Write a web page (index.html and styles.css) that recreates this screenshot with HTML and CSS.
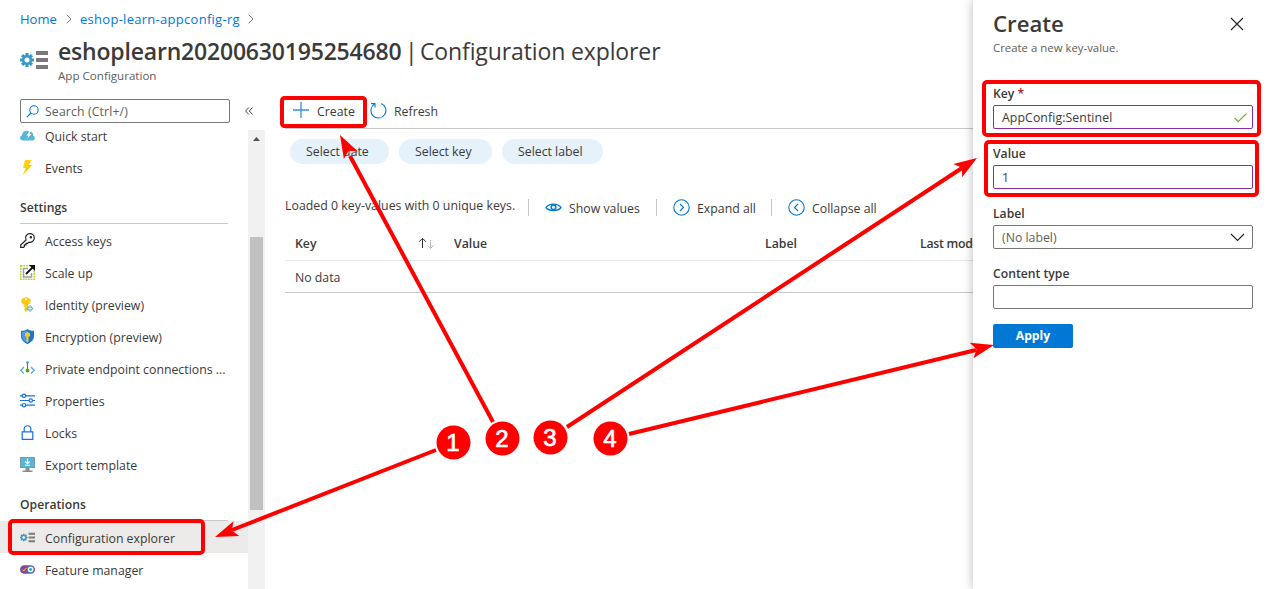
FILE: index.html
```html
<!DOCTYPE html>
<html lang="en">
<head>
<meta charset="utf-8">
<title>Configuration explorer</title>
<link rel="stylesheet" href="styles.css">
</head>
<body>
<svg class="defs" width="0" height="0">
  <symbol id="appconfig" viewBox="0 0 28 18">
    <g stroke="#3999c6" stroke-width="3.2"><path d="M7 2v14M0 9h14M2.1 4.1l9.8 9.8M2.1 13.9l9.8-9.8"/></g>
    <circle cx="7" cy="9" r="5" fill="#3999c6"/><circle cx="7" cy="9" r="2.5" fill="#fff"/>
    <path d="M16 0h12v4H16zM16 7h12v4H16zM16 14h12v4H16z" fill="#7a7a7a"/>
  </symbol>
</svg>
<div class="app">
  <div class="page">
    <nav class="crumbs">
      <a class="crumb-home">Home</a>
      <svg class="chev" viewBox="0 0 6 10"><path d="M.7.7 5 5 .7 9.3"/></svg>
      <a class="crumb-rg">eshop-learn-appconfig-rg</a>
      <svg class="chev" viewBox="0 0 6 10"><path d="M.7.7 5 5 .7 9.3"/></svg>
    </nav>
    <header class="title-row">
      <svg class="title-icon"><use href="#appconfig"/></svg>
      <div class="titles">
        <h1><b>eshoplearn20200630195254680</b><span class="bar">|</span><span class="blade-name">Configuration explorer</span></h1>
        <p>App Configuration</p>
      </div>
    </header>
    <div class="columns">
      <aside class="sidebar">
        <div class="search-row">
          <div class="search">
            <svg width="13" height="13" viewBox="0 0 13 13" fill="none" stroke="#0078d4" stroke-width="1.1"><circle cx="8" cy="5" r="4.2"/><path d="M5 8 .8 12.2"/></svg>
            <span>Search (Ctrl+/)</span>
          </div>
          <svg class="collapse" width="8" height="8" viewBox="0 0 8 8" fill="none" stroke="#444"><path d="M3.8.5.6 4l3.2 3.5M7.5.5 4.3 4l3.2 3.5"/></svg>
        </div>
        <div class="menu-wrap">
          <div class="menu">
            <div class="item first"><svg viewBox="0 0 15 15"><path d="M3 12.5C-.5 12.500-.8 8 2 7.500 2 3.500 6 1.500 9 3.500c3-.5 4.500 1.500 4 4 2.700.8 2.300 5-1 5z" fill="#59b4d9"/><path d="m9.500 3-3 4.500h2L7 11l4.500-5h-2L11 3z" fill="#fff"/></svg><span>Quick start</span></div>
            <div class="item"><svg viewBox="0 0 15 15"><path d="M5 0h6.500L8.700 5H12L3 15l2.500-7H3z" fill="#fcd116"/><path d="M11.500 0 8.700 5H12L5 12.500 8.500 6H6z" fill="#ffb900" opacity=".6"/></svg><span>Events</span></div>
            <h2>Settings</h2>
            <div class="item"><svg viewBox="0 0 15 15" fill="none" stroke="#222" stroke-width="1.200"><path d="M6 7C4.500 3 7 .7 10 .7c2.500 0 4.300 1.800 4.300 4.200 0 3.300-3 5-5.500 4.200L7.500 10.400H6v1.500H4.400v1.500l-.9 1H.7v-2.400z"/><circle cx="10.800" cy="4.200" r=".6" fill="#222"/></svg><span>Access keys</span></div>
            <div class="item"><svg viewBox="0 0 15 15" fill="none"><path d="M.8.8h13.400v13.400H.8z" stroke="#b8d432" stroke-width="1.600" stroke-dasharray="1.800 .8"/><path d="M8 3.500H3.500v8.500h8V8" stroke="#a0a1a2" stroke-width="1.500"/><path d="m6 9 7-7" stroke="#111" stroke-width="1.800"/><path d="M9 0h6v6z" fill="#111"/></svg><span>Scale up</span></div>
            <div class="item"><svg viewBox="0 0 15 15"><path d="M6 0l4.500 2v4L8 8v5.500L6 15 4.200 13v-1.500L5.300 10.500 4.200 9.500V8L1.500 6V2z" fill="#fcc91b"/><circle cx="6" cy="2.200" r="1" fill="#fff"/><path d="m10 8 3.500 3.500L10 15l-3.500-3.500z" fill="#59b4d9"/><path d="M10 9v5M8 11.500h4" stroke="#fff" stroke-width=".7"/></svg><span>Identity (preview)</span></div>
            <div class="item"><svg viewBox="0 0 15 15"><path d="M7.500 0c2 1.500 4 1.700 6.500 1.700V7c0 4-3 6.500-6.500 8C4 13.500 1 11 1 7V1.700C3.500 1.700 5.500 1.500 7.500 0z" fill="#1878d2"/><path d="M7.500 1.200c-2 1.300-3.500 1.500-5.500 1.600V7c0 3.500 2.500 5.500 5.500 6.800z" fill="#4b9bea"/><path d="M7.500 3 10 4.300v2.800L8.500 8v4.500l-1 1-1-1V8L5 7.100V4.300z" fill="#fcc91b"/></svg><span>Encryption (preview)</span></div>
            <div class="item"><svg viewBox="0 0 15 15" fill="none" stroke="#50aad6" stroke-width="1.300"><path d="M4 6 .8 9.300 4 12.600M11 6l3.200 3.300L11 12.600"/><path d="M7.500 1v8" stroke="#3a7d8c" stroke-width="1"/><circle cx="7.500" cy="1.500" r="1.300" fill="#3999c6" stroke="none"/><circle cx="7.500" cy="9.500" r="1.900" fill="#57a300" stroke="none"/></svg><span>Private endpoint connections ...</span></div>
            <div class="item"><svg viewBox="0 0 15 15" fill="#fff" stroke="#1b6fe0" stroke-width="1.200"><path d="M0 2.800h15M0 7.500h15M0 12.200h15"/><circle cx="4" cy="2.800" r="1.700"/><circle cx="10.800" cy="7.500" r="1.700"/><circle cx="4" cy="12.200" r="1.700"/></svg><span>Properties</span></div>
            <div class="item"><svg viewBox="0 0 15 15" fill="none" stroke="#1b6fe0" stroke-width="1.200"><path d="M2.200 6.800h10.600v7.500H2.200zM4.200 6.500V3.800C4.200-.3 10.800-.3 10.800 3.800v2.700"/></svg><span>Locks</span></div>
            <div class="item"><svg viewBox="0 0 15 15"><path d="M0 0h15v11H0z" fill="#7a9aa5"/><path d="M1 1h13v9H1z" fill="#59b4d9"/><path d="M5.500 11h4v2.500h3V15h-10v-1.500h3z" fill="#8a8d90"/><path d="M7.500 1.500v5M5.300 4.500l2.200 2.300 2.200-2.300M5 8.300h5" fill="none" stroke="#fff" stroke-width="1.100"/></svg><span>Export template</span></div>
            <h2>Operations</h2>
            <div class="item selected"><svg><use href="#appconfig"/></svg><span>Configuration explorer</span></div>
            <div class="item"><svg viewBox="0 0 15 15"><rect y="3.200" width="15" height="8.600" rx="4.300" fill="#804998"/><circle cx="10.600" cy="7.500" r="3.500" fill="#3999c6"/><circle cx="10.600" cy="7.500" r="2.100" fill="#3999c6" stroke="#fff" stroke-width="1.400"/><path d="m2.300 7.500 1.500 1.500 2.500-3" fill="none" stroke="#fcd116"/></svg><span>Feature manager</span></div>
          </div>
          <div class="scrollbar"><i class="up"></i><i class="thumb"></i></div>
        </div>
      </aside>
      <main class="content">
        <div class="toolbar">
          <div class="tool create"><svg width="16" height="16" viewBox="0 0 16 16" stroke="#3491dc" stroke-width="1.300"><path d="M8 0v16M0 8h16"/></svg><span>Create</span></div>
          <div class="tool refresh"><svg width="17" height="17" viewBox="0 0 17 17" fill="none" stroke="#0078d4" stroke-width="1.100"><path d="M11.300 1.600a7.500 7.500 0 1 1-6.800.5M5 5.500V1.600H1"/></svg><span>Refresh</span></div>
        </div>
        <div class="chips"><span class="chip c1">Select date</span><span class="chip c2">Select key</span><span class="chip c3">Select label</span></div>
        <div class="status">
          <span class="loaded">Loaded 0 key-values with 0 unique keys.</span>
          <div class="cmd show"><svg width="17" height="17" viewBox="0 0 17 17" fill="none" stroke="#0078d4" stroke-width="1.300"><path d="M1 8.500C4 4 13 4 16 8.500 13 12.500 4 12.500 1 8.500z"/><circle cx="8.500" cy="8.300" r="2.300" stroke-width="1.500"/></svg><span>Show values</span></div>
          <div class="cmd expand"><svg width="17" height="17" viewBox="0 0 17 17" fill="none" stroke="#0078d4" stroke-width="1.100"><circle cx="8.500" cy="8.500" r="7.700"/><path d="m7 5 3.500 3.500L7 12"/></svg><span>Expand all</span></div>
          <div class="cmd fold"><svg width="17" height="17" viewBox="0 0 17 17" fill="none" stroke="#0078d4" stroke-width="1.100"><circle cx="8.500" cy="8.500" r="7.700"/><path d="M10 5 6.500 8.500 10 12"/></svg><span>Collapse all</span></div>
        </div>
        <div class="table">
          <div class="thead">
            <div>Key<svg class="sort" width="17" height="13" viewBox="0 0 17 13" fill="none"><path d="M4.500 11V1.300M1 4.800l3.500-3.500L8 4.800" stroke="#333"/><path d="M12.500 3v8.500M9.500 8.500l3 3 3-3" stroke="#bbb"/></svg></div>
            <div>Value</div><div>Label</div><div class="modified">Last mod</div>
          </div>
          <div class="trow">No data</div>
        </div>
      </main>
    </div>
  </div>
  <section class="panel">
    <div class="panel-head"><h3>Create</h3><svg width="14" height="14" viewBox="0 0 14 14" stroke="#222" stroke-width="1.100"><path d="m1 1 12 12M13 1 1 13"/></svg></div>
    <p class="hint">Create a new key-value.</p>
    <div class="field"><label>Key <em>*</em></label><div class="box edited"><span class="keytext">AppConfig:Sentinel</span><svg width="13" height="10" viewBox="0 0 13 10" fill="none" stroke="#6bb32e" stroke-width="1.200"><path d="m.7 5 3.500 3.700L12.300.8"/></svg></div></div>
    <div class="field"><label>Value</label><div class="box edited"><span>1</span></div></div>
    <div class="field"><label>Label</label><div class="box select"><span class="muted">(No label)</span><svg width="15" height="9" viewBox="0 0 15 9" fill="none" stroke="#222" stroke-width="1.100"><path d="m1 1 6.500 6.500L14 1"/></svg></div></div>
    <div class="field"><label>Content type</label><div class="box"></div></div>
    <button class="apply">Apply</button>
  </section>
</div>
<svg class="callouts" width="1273" height="589" viewBox="0 0 1273 589">
  <g fill="none" stroke="#f00" stroke-width="4">
    <rect x="282" y="98" width="83" height="28" rx="2.500"/>
    <rect x="10" y="521" width="193" height="32" rx="3"/>
    <rect x="984" y="82" width="275" height="53" rx="3"/>
    <rect x="986" y="142" width="271" height="53" rx="3"/>
    <path d="M436 450 232 530M493 422 350 156M567 427 962 168M629 434 976 350"/>
  </g>
  <g fill="#f00">
    <path d="M0 0-23 8-18 0-23-8z" transform="translate(215 537) rotate(158.600)"/>
    <path d="M0 0-23 8-18 0-23-8z" transform="translate(340 135) rotate(-118.300)"/>
    <path d="M0 0-23 8-18 0-23-8z" transform="translate(977 158) rotate(-33.200)"/>
    <path d="M0 0-23 8-18 0-23-8z" transform="translate(994 345) rotate(-13.600)"/>
    <circle cx="453.500" cy="442.500" r="17"/><circle cx="502.500" cy="438.500" r="17"/><circle cx="550.500" cy="437.500" r="17"/><circle cx="610.500" cy="438.500" r="17"/>
  </g>
  <g class="numbers"><text x="453" y="451">1</text><text x="502" y="447">2</text><text x="550" y="446">3</text><text x="610" y="447">4</text></g>
</svg>
</body>
</html>
```
FILE: styles.css
```css
* { box-sizing: border-box; }
body { margin: 0; font: 12.3px/18px "Open Sans", "Noto Sans", sans-serif; color: #3b3a39; background: #fff; overflow: hidden; }
h1, h2, h3, p { margin: 0; }
svg { flex: none; }
.defs { position: absolute; }
.app { position: relative; display: flex; width: 1273px; height: 589px; overflow: hidden; }
.page { width: 973px; display: flex; flex-direction: column; overflow: hidden; }
.crumbs { display: flex; align-items: center; height: 38px; padding: 0 0 0 20px; color: #0078d4; font-size: 13px; }
.crumb-home { width: 46px; }
.crumb-rg { width: 162px; margin-left: 8px; margin-right: 6px; letter-spacing: .28px; white-space: nowrap; }
.chev { width: 6px; height: 10px; fill: none; stroke: #777; }
.title-row { display: flex; height: 53px; padding-left: 20px; }
.title-icon { width: 28px; height: 18px; margin-top: 13px; }
.titles { margin-left: 10px; white-space: nowrap; }
h1 { font-size: 23px; line-height: 30px; font-weight: 400; margin-top: -2px; display: flex; }
h1 b { font-weight: 600; width: 347px; letter-spacing: -.19px; }
.bar { width: 15px; }
.blade-name { letter-spacing: -.12px; }
.titles p { margin-top: 1px; font-size: 11.6px; line-height: 18px; color: #605e5c; }
.columns { display: flex; height: 498px; }
.sidebar { width: 265px; display: flex; flex-direction: column; }
.search-row { display: flex; align-items: center; height: 32px; padding: 8px 0 0 20px; }
.search { display: flex; align-items: center; gap: 6px; width: 210px; height: 24px; border: 1px solid #777; border-radius: 2px; padding-left: 5px; color: #605e5c; }
.search span { letter-spacing: .12px; padding-top: 1px; }
.collapse { margin-left: 15px; }
.menu-wrap { display: flex; height: 466px; }
.menu { width: 248px; overflow: hidden; }
.item { display: flex; align-items: center; height: 32px; padding: 3px 0 0 20px; white-space: nowrap; }
.item span { padding-top: 1px; }
.item svg { width: 15px; height: 15px; margin-right: 10px; margin-top: -3px; }
.item.first { margin-top: -4px; }
.item.selected { background: #edebe9; }
h2 { height: 41px; margin: 0 20px; padding-top: 16px; border-bottom: 1px solid #c8c8c8; font-size: 12.2px; line-height: 18px; font-weight: 600; }
.scrollbar { width: 17px; margin-top: 7px; padding: 7px 2px 0; background: #f1f1f1; }
.up { display: block; width: 7px; height: 4px; margin-left: 3px; background: #505050; clip-path: polygon(50% 0, 100% 100%, 0 100%); }
.thumb { display: block; width: 13px; height: 273px; margin-top: 96px; background: #c1c1c1; }
.content { width: 708px; padding-left: 20px; }
.toolbar { display: flex; height: 38px; border-bottom: 1px solid #c8c8c8; }
.tool { display: flex; align-items: center; height: 38px; padding-top: 2px; }
.tool svg { margin-top: -2px; }
.tool span { padding-top: 2px; }
.create { width: 85px; padding-left: 8px; gap: 8px; }
.refresh { gap: 7px; }
.chips { display: flex; gap: 10px; margin: 10px 0 0 5px; }
.chip { height: 25px; padding-left: 16px; border-radius: 13px; background: #e5f1fb; line-height: 26px; white-space: nowrap; }
.c1 { width: 99px; } .c2 { width: 93px; } .c3 { width: 101px; }
.status { display: flex; align-items: center; height: 32px; margin-top: 27px; white-space: nowrap; }
.loaded { width: 243px; margin-top: -3px; letter-spacing: .03px; }
.cmd { display: flex; align-items: center; height: 17px; border-left: 1px solid #c8c8c8; padding-left: 16px; }
.cmd span { margin-left: 7px; margin-top: 4px; }
.show { width: 128px; } .expand { width: 115px; }
.thead { display: grid; grid-template-columns: 159px 311px 155px auto; height: 38px; padding: 4px 0 0 10px; align-items: center; border-bottom: 1px solid #e5e5e5; font-weight: 600; white-space: nowrap; }
.thead div:first-child { display: flex; align-items: center; justify-content: space-between; padding-right: 19px; }
.modified { letter-spacing: -.25px; }
.trow { height: 32px; padding: 8px 10px 0; border-bottom: 1px solid #c8c8c8; }
.panel { position: relative; width: 300px; padding: 9px 20px 0; background: #fff; box-shadow: 0 0 10px rgba(0,0,0,.28); }
.panel-head { display: flex; align-items: center; justify-content: space-between; height: 30px; padding-right: 9px; }
h3 { font-size: 22.2px; line-height: 30px; font-weight: 600; }
.hint { color: #605e5c; font-size: 11.4px; line-height: 18px; margin-bottom: 28px; }
.field { height: 60px; }
label { display: block; height: 20px; line-height: 18px; font-weight: 600; font-size: 12.2px; }
.field em { color: #a4262c; font-style: normal; }
.box { display: flex; align-items: center; justify-content: space-between; height: 24px; border: 1px solid #777; border-radius: 2px; padding: 1px 5px 0 8px; }
.select { padding-right: 7px; }
.edited { border-color: #8a2da5; }
.keytext { letter-spacing: .08px; }
.muted { color: #605e5c; }
.apply { display: block; width: 80px; height: 24px; margin-top: -1px; border: 0; border-radius: 2px; background: #0078d4; color: #fff; font: 700 12.2px/22px "Open Sans", sans-serif; }
.callouts { position: absolute; left: 0; top: 0; }
.numbers { fill: #fff; stroke: #fff; stroke-width: .7; font: 400 24px "Liberation Sans", Arial, sans-serif; text-anchor: middle; }
```
